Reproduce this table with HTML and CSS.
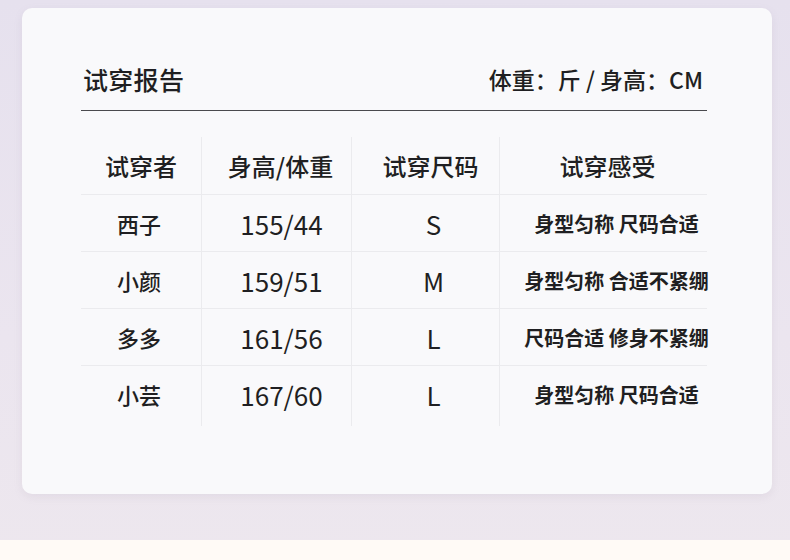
FILE: index.html
```html
<!DOCTYPE html>
<html lang="zh">
<head>
<meta charset="utf-8">
<link rel="stylesheet" href="styles.css">
</head>
<body>
<div class="page">
  <div class="card">
    <div class="head">
      <div class="title">试穿报告</div>
      <div class="unit">体重：斤 / 身高：CM</div>
    </div>
    <div class="table">
      <div class="row hrow">
        <div class="cell">试穿者</div>
        <div class="cell">身高/体重</div>
        <div class="cell">试穿尺码</div>
        <div class="cell">试穿感受</div>
      </div>
      <div class="row">
        <div class="cell name">西子</div>
        <div class="cell num">155/44</div>
        <div class="cell num sz">S</div>
        <div class="cell feel">身型匀称 尺码合适</div>
      </div>
      <div class="row">
        <div class="cell name">小颜</div>
        <div class="cell num">159/51</div>
        <div class="cell num sz">M</div>
        <div class="cell feel">身型匀称 合适不紧绷</div>
      </div>
      <div class="row">
        <div class="cell name">多多</div>
        <div class="cell num">161/56</div>
        <div class="cell num sz">L</div>
        <div class="cell feel">尺码合适 修身不紧绷</div>
      </div>
      <div class="row last">
        <div class="cell name">小芸</div>
        <div class="cell num">167/60</div>
        <div class="cell num sz">L</div>
        <div class="cell feel">身型匀称 尺码合适</div>
      </div>
    </div>
  </div>
  <div class="strip"></div>
</div>
</body>
</html>
```

FILE: styles.css
```css
html, body {
  margin: 0;
  padding: 0;
}
body {
  width: 790px;
  height: 560px;
  overflow: hidden;
  background: linear-gradient(180deg, #e6e1ee 0%, #ebe5ef 60%, #ede7ee 100%);
  font-family: "Noto Sans CJK SC", "Noto Sans", sans-serif;
  color: #1f1f22;
}
.page {
  display: flex;
  flex-direction: column;
  height: 560px;
}
.card {
  margin: 8px 18px 0 22px;
  height: 486px;
  box-sizing: border-box;
  background: #f9f9fb;
  border-radius: 10px;
  box-shadow: 0 3px 8px rgba(150, 130, 160, 0.12);
  padding: 56px 65px 0 59px;
}
.head {
  display: flex;
  justify-content: space-between;
  align-items: center;
  height: 32px;
  padding-bottom: 14px;
  border-bottom: 1.5px solid #4a4a4e;
}
.title {
  font-size: 25px;
  font-weight: 500;
  letter-spacing: 0.3px;
  padding-left: 2px;
  line-height: 32px;
  margin-top: -2px;
}
.unit {
  font-size: 23px;
  font-weight: 500;
  line-height: 32px;
  padding-right: 4px;
  margin-top: -2px;
}
.table {
  margin-top: 26px;
  display: flex;
  flex-direction: column;
}
.row {
  display: grid;
  grid-template-columns: 120px 150px 148px 208px;
  height: 57px;
  box-sizing: border-box;
  border-bottom: 1px solid #ebebee;
}
.row.hrow {
  height: 58px;
}
.row.last {
  border-bottom: none;
  height: 60px;
}
.cell {
  display: flex;
  align-items: center;
  justify-content: center;
  border-left: 1px solid #ebebee;
  font-size: 22px;
  font-weight: 500;
  white-space: nowrap;
  min-width: 0;
}
.cell:first-child {
  border-left: none;
}
.hrow .cell {
  font-size: 24px;
  font-weight: 500;
  padding-bottom: 1px;
}
.hrow .cell:nth-child(2) {
  padding-left: 8px;
}
.hrow .cell:nth-child(3) {
  padding-left: 10px;
}
.hrow .cell:nth-child(4) {
  padding-left: 8px;
}
.name {
  font-size: 22px;
  padding-right: 4px;
}
.last .cell {
  padding-bottom: 4px;
}
.num {
  font-size: 26px;
  font-weight: 400;
  padding-left: 10px;
}
.sz {
  padding-left: 16px;
}
.feel {
  font-size: 20px;
  font-weight: 600;
  padding-left: 26px;
}
.strip {
  margin-top: 46px;
  flex: 1;
  background: #fffaf6;
}
```
